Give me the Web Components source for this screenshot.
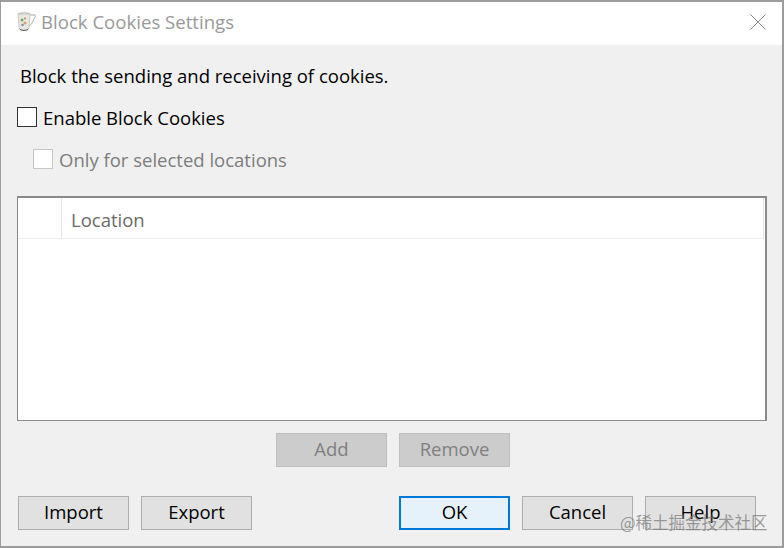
<!DOCTYPE html>
<html><head><meta charset="utf-8"><style>
html,body{margin:0;padding:0;background:#f0f0f0}
body{font-family:"Open Sans","Noto Sans","Liberation Sans",sans-serif}
</style></head><body>
<template id="t-dialog"><style>
:host{display:flex;flex-direction:column;position:relative;width:784px;height:548px;box-sizing:border-box;background:#f0f0f0;border:1px solid #9c9c9c;border-width:2px 2px 2px 1px;overflow:hidden;color:#000;font-size:18.5px}
.title{display:flex;align-items:center;box-sizing:border-box;height:43px;background:#fff;flex:none;padding:0 0 3px 13px;gap:4px;color:#999;font-size:18.6px}
.title .t{flex:1;line-height:40px}
.close{width:16px;height:16px;margin-right:16px;display:block}
.body{flex:1;display:flex;flex-direction:column;padding:0 15px 0 16px;min-height:0}
.wm{position:absolute;left:619px;top:509px;font:16.500px/22px "Noto Sans CJK SC",sans-serif;color:rgba(120,120,120,.72);white-space:nowrap}
</style>
<div class="title"><slot name="icon"></slot><span class="t"><slot name="title"></slot></span>
<svg class="close" viewBox="0 0 16 16"><path d="M.5.5 15.5 15.5M15.5.5.5 15.5" stroke="#8c8c8c" stroke-width="1" fill="none"/></svg></div>
<div class="body"><slot></slot></div>
<div class="wm">@稀土掘金技术社区</div></template>

<template id="t-check"><style>
:host{display:flex;align-items:center;gap:6px;height:26px;font-size:18.5px}
.b{width:18px;height:18px;border:1px solid #333;background:#fff;flex:none}
:host([disabled]){color:#7d7d7d}
:host([disabled]) .b{border-color:#c6c6c6}
</style><span class="b"></span><span><slot></slot></span></template>

<template id="t-table"><style>
:host{display:block;box-sizing:border-box;height:225px;background:#fff;border:1px solid #8a8a8a;border-width:2px 2px 1px 1px}
.h{display:flex;height:40px;border-bottom:1px solid #efefef;margin-right:1px}
.c0{width:43px;border-right:1px solid #e4e4e4;flex:none}
.c1{flex:1;padding:3px 0 0 9px;line-height:37px;color:#6b6b6b;font-size:18.5px;border-right:1px solid #e4e4e4}
</style><div class="h"><div class="c0"></div><div class="c1"><slot></slot></div></div></template>

<template id="t-btn"><style>
:host{display:flex;align-items:center;justify-content:center;box-sizing:border-box;width:111px;height:34px;background:#e1e1e1;border:1px solid #adadad;font-size:18.5px;color:#000;flex:none;padding-bottom:3px}
:host([disabled]){background:#ccc;border-color:#bfbfbf;color:#808080}
:host([primary]){background:#e5f1fb;border:2px solid #0078d7}
</style><slot></slot></template>

<template id="t-row"><style>
:host{display:flex;gap:12px}
</style><slot></slot></template>

<script>
function def(name,tid){customElements.define(name,class extends HTMLElement{constructor(){super();this.attachShadow({mode:'open'}).appendChild(document.getElementById(tid).content.cloneNode(true));}});}
def('x-dialog','t-dialog');def('x-check','t-check');def('x-table','t-table');def('x-btn','t-btn');def('x-row','t-row');
</script>

<x-dialog>
<svg slot="icon" width="22" height="22" viewBox="0 0 22 22" style="display:block;flex:none;margin-left:1px;filter:blur(.35px)">
<path d="M3 3H15L14 17Q13.500 19 9 19 4.500 19 4 17Z" fill="#e9e9e4" stroke="#b9b9b4" stroke-width=".7"/>
<path d="M3 3Q9 1 15 2.500" stroke="#bdbdb8" stroke-width="1.200" fill="none"/>
<path d="M15 4H19.500Q20.500 4 20 6L17 12Q16 14 14 14.500" stroke="#c4c4bf" stroke-width="1.300" fill="none"/>
<circle cx="7" cy="9" r="1.500" fill="#7aa36c"/><circle cx="10" cy="12" r="1.600" fill="#d5a86a"/><circle cx="7.500" cy="14" r="1.300" fill="#7f8fb5"/><circle cx="10" cy="7.500" r="1" fill="#c47a6a"/>
<path d="M4.500 17.500Q9 20.500 13.500 17.500L13 19Q9 21 5 19Z" fill="#5e5e5e"/>
</svg>
<span slot="title">Block Cookies Settings</span>

<div style="height:31px;margin-top:17px;margin-left:3px;line-height:28px;white-space:nowrap">Block the sending and receiving of cookies.</div>
<x-check style="margin-top:11px">Enable Block Cookies</x-check>
<x-check disabled style="margin-top:16px;margin-left:16px;">Only for selected locations</x-check>
<x-table style="margin-top:24px">Location</x-table>
<x-row style="margin-top:12px;margin-left:259px"><x-btn disabled>Add</x-btn><x-btn disabled>Remove</x-btn></x-row>
<x-row style="margin-top:29px;margin-left:1px"><x-btn>Import</x-btn><x-btn>Export</x-btn><span style="width:123px"></span><x-btn primary>OK</x-btn><x-btn>Cancel</x-btn><x-btn>Help</x-btn></x-row>
</x-dialog>
</body></html>
